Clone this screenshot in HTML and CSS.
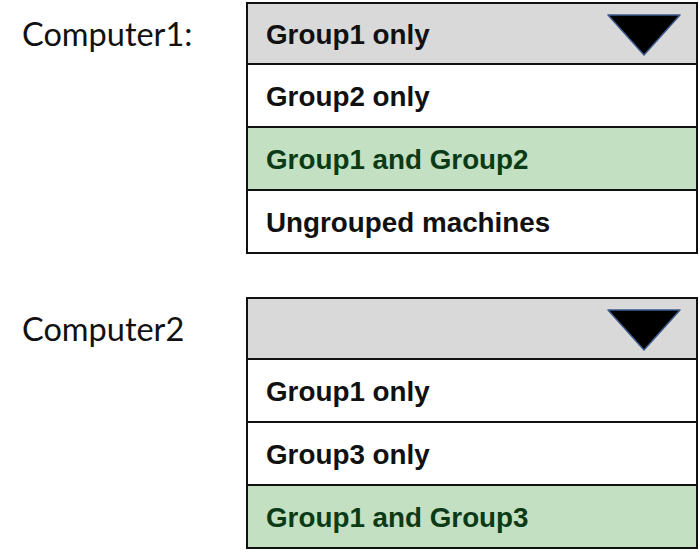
FILE: index.html
```html
<!DOCTYPE html>
<html lang="en">
<head>
  <meta charset="UTF-8" />
  <title>Computer groups</title>
  <link rel="stylesheet" href="styles.css">
</head>
<body>
  <div class="question">
    <div class="label">Computer1:</div>
    <div class="select">
      <div class="head">
        <span class="value">Group1 only</span>
        <svg class="arrow" width="74" height="42" viewBox="0 0 74 42">
          <polygon points="1,1 73,1 37,41" fill="#000" stroke="#3d5a8a" stroke-width="1.5" stroke-linejoin="round" />
        </svg>
      </div>
      <div class="option">Group2 only</div>
      <div class="option picked">Group1 and Group2</div>
      <div class="option">Ungrouped machines</div>
    </div>
  </div>

  <div class="question">
    <div class="label">Computer2</div>
    <div class="select">
      <div class="head">
        <span class="value"></span>
        <svg class="arrow" width="74" height="42" viewBox="0 0 74 42">
          <polygon points="1,1 73,1 37,41" fill="#000" stroke="#3d5a8a" stroke-width="1.5" stroke-linejoin="round" />
        </svg>
      </div>
      <div class="option">Group1 only</div>
      <div class="option">Group3 only</div>
      <div class="option picked">Group1 and Group3</div>
    </div>
  </div>
</body>
</html>
```

FILE: styles.css
```css
/* --- Global --- */
* { box-sizing: border-box; margin: 0; padding: 0; }
body {
  background: #fff;
  color: #111;
  padding-top: 2px;
  display: flex;
  flex-direction: column;
  gap: 43px;
}

/* --- Question row --- */
.question {
  display: flex;
  align-items: flex-start;
}
.label {
  width: 246px;
  padding-left: 22px;
  height: 62px;
  display: flex;
  align-items: center;
  font-family: 'Lato', sans-serif;
  font-size: 32.5px;
  color: #111;
}

/* --- Drop-down box --- */
.select {
  width: 452px;
  border: 2px solid #111;
  font-family: 'Liberation Sans', Arial, sans-serif;
  font-weight: bold;
  font-size: 27.8px;
}
.head,
.option {
  display: flex;
  align-items: center;
  padding-left: 18px;
  padding-top: 2px;
}
.head {
  height: 59px;
  background: #d9d9d9;
  justify-content: space-between;
  padding-right: 15px;
}
.arrow { display: block; }
.option {
  height: 63px;
  border-top: 2px solid #111;
  background: #fff;
}
.option.picked {
  background: #c3e0c3;
  color: #0b3a16;
}
```
